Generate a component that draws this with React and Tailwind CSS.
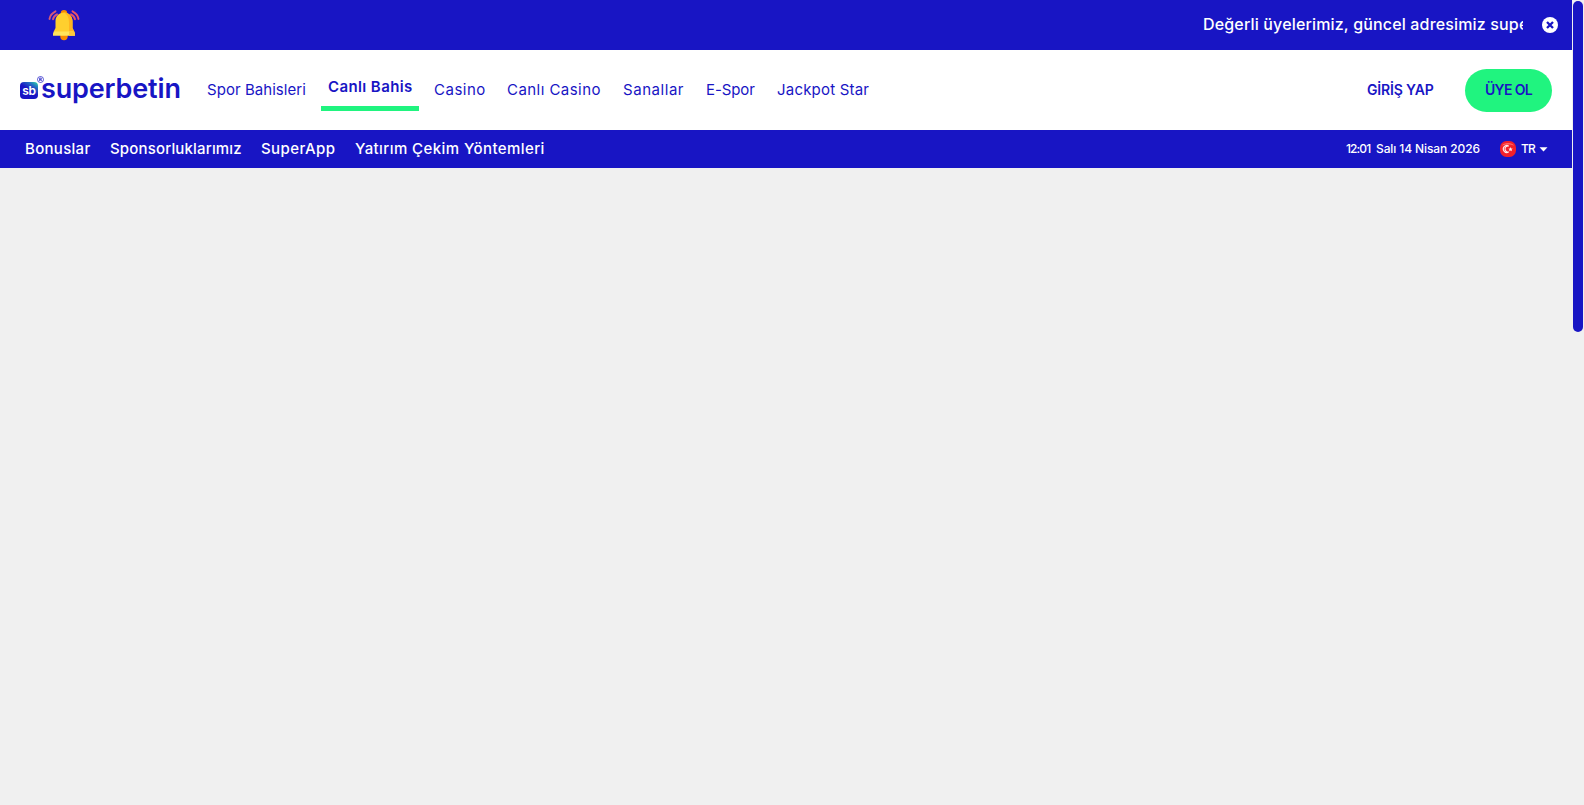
import { useState } from "react";

const NAV_ITEMS = [
  { label: "Spor Bahisleri", className: "w-[99px] tracking-[0.05px]" },
  { label: "Canlı Bahis", className: "w-[84px] tracking-[0.4px]", active: true },
  { label: "Casino", className: "w-[51px] tracking-[0.5px]" },
  { label: "Canlı Casino", className: "w-[94px] tracking-[0.45px]" },
  { label: "Sanallar", className: "w-[61px] tracking-[0.55px]" },
  { label: "E-Spor", className: "w-[49px] tracking-[-0.1px]" },
  { label: "Jackpot Star", className: "w-[92px] tracking-[0.2px]" },
];

const SUB_ITEMS = [
  { label: "Bonuslar", className: "w-[65px] tracking-[0.3px]" },
  { label: "Sponsorluklarımız", className: "w-[131px] tracking-[0.17px]" },
  { label: "SuperApp", className: "w-[74px] tracking-[0.4px]" },
  { label: "Yatırım Çekim Yöntemleri", className: "w-[190px] tracking-[0.42px]" },
];

const BellIcon = () => (
  <svg width="32" height="32" viewBox="0 0 32 32" fill="none" aria-hidden="true">
    <path d="M16 1a3.200 3.200 0 0 1 3.200 3.200V7h-6.400V4.200A3.200 3.200 0 0 1 16 1Z" fill="#f98c00" />
    <circle cx="16" cy="27.500" r="3.700" fill="#f98c00" />
    <path d="M16 3.500c4.900 0 8.500 3.800 8.500 8.500v7l2 4H5.500l2-4v-7c0-4.700 3.600-8.500 8.500-8.500Z" fill="#ffcf2e" />
    <path d="M16 3.500c4.900 0 8.500 3.800 8.500 8.500v7l2 4H21v-9c0-5-1-8-5-10.500Z" fill="#ffb420" />
    <path d="M7.200 22.500h17.600a2.200 2.200 0 0 1 2.200 2.200v2H5v-2a2.200 2.200 0 0 1 2.200-2.200Z" fill="#ffe45c" />
    <path d="M21 22.500h3.800a2.200 2.200 0 0 1 2.200 2.200v2h-6Z" fill="#ffc93a" />
    <path d="M7.500 2.300C4.200 4 2 6.500 1.500 10M9 5.300c-2 1-3.500 2.700-4 5" stroke="#d65a78" strokeWidth="1.900" strokeLinecap="round" />
    <path d="M24.500 2.300c3.300 1.700 5.500 4.200 6 7.700M23 5.300c2 1 3.500 2.700 4 5" stroke="#ed5565" strokeWidth="1.900" strokeLinecap="round" />
  </svg>
);

const CloseIcon = () => (
  <svg width="16" height="16" viewBox="0 0 16 16" aria-hidden="true">
    <circle cx="8" cy="8" r="8" fill="#fff" />
    <path d="m5 5 6 6m0-6-6 6" stroke="#1815c4" strokeWidth="2.300" />
  </svg>
);

const FlagIcon = () => (
  <svg width="16" height="16" viewBox="0 0 16 16" aria-hidden="true">
    <rect width="16" height="16" rx="6.500" fill="#f3202a" />
    <path d="M2 4.500C3.500 1 12.500 1 14 4.500 11 3 5 3 2 4.500Z" fill="#ff6a6e" />
    <path d="M8.800 5.100a3.500 3.500 0 1 0 0 5.800M8.800 5.100a3 3 0 1 0 0 5.800" fill="none" stroke="#ffe9e9" strokeWidth="1.100" />
    <path d="m10.500 6 .7 1.400 1.500.2-1.100 1.100.3 1.500-1.400-.7-1.300.7.2-1.500-1-1.100 1.500-.2Z" fill="#ffe9e9" />
  </svg>
);

const Logo = () => (
  <a href="#" className="flex w-[161px] h-[34px] ml-5 shrink-0" aria-label="superbetin">
    <span className="relative mt-[9px] flex h-[17px] w-[18px] shrink-0 items-center justify-center rounded-[4px] bg-[linear-gradient(215deg,#2fe2a0_0%,#2470c4_22%,#1815c4_48%)] font-['Inter',sans-serif] text-[12px] font-semibold leading-none tracking-[-0.3px] text-white">
      sb
      <svg className="absolute -top-[6px] left-[17px]" width="7" height="7" viewBox="0 0 7 7" fill="none" aria-hidden="true">
        <circle cx="3.500" cy="3.500" r="3" stroke="#1815c4" strokeWidth=".7" />
        <path d="M2.700 5V2.100h1a.8.8 0 0 1 0 1.600h-1m1 0L4.600 5" stroke="#1815c4" strokeWidth=".8" />
      </svg>
    </span>
    <span className="ml-[3px] whitespace-nowrap font-['Inter',sans-serif] text-[27px] font-semibold leading-[32px] tracking-[-0.15px]">
      superbetin
    </span>
  </a>
);

const App = () => {
  const [noticeOpen, setNoticeOpen] = useState(true);

  return (
    <div className="flex h-screen overflow-hidden bg-[#f0f0f0] font-['Inter',sans-serif] text-[#1815c4]">
      <div className="flex-1 min-w-0">
        {/* Announcement */}
        {noticeOpen && (
          <div className="flex h-[50px] items-center bg-[#1815c4] text-white">
            <div className="ml-12 shrink-0"><BellIcon /></div>
            <div className="ml-[50px] flex-1 min-w-0 overflow-hidden">
              <p className="pl-[1073px] pb-[2px] whitespace-nowrap text-[16px] font-medium leading-6 tracking-[0.16px]">
                Değerli üyelerimiz, güncel adresimiz superbetin
              </p>
            </div>
            <button onClick={() => setNoticeOpen(false)} className="ml-[19px] mr-[14px] shrink-0" aria-label="Kapat">
              <CloseIcon />
            </button>
          </div>
        )}

        {/* Header */}
        <header className="flex h-20 items-center bg-white">
          <Logo />
          <nav className="ml-[19px] flex h-full items-center gap-2">
            {NAV_ITEMS.map(({ label, className, active }) => (
              <a key={label} href="#"
                className={`flex px-[7px] text-[15px] whitespace-nowrap ${
                  active ? "mt-[1px] h-[41px] border-b-[5px] border-[#20f47f] pt-[6px] leading-[22px] font-semibold" : "leading-[22px]"
                }`}>
                <span className={className}>{label}</span>
              </a>
            ))}
          </nav>
          <div className="ml-auto mr-5 flex items-center text-[14px] font-semibold">
            <a href="#" className="w-[68px] pb-px whitespace-nowrap tracking-[-0.17px]">GİRİŞ YAP</a>
            <button className="ml-[30px] h-[43px] w-[87px] rounded-full bg-[#20f47f] pb-px whitespace-nowrap tracking-[-0.65px]">ÜYE OL</button>
          </div>
        </header>

        {/* Secondary bar */}
        <div className="flex h-[38px] items-center bg-[#1815c4] text-white">
          <nav className="ml-[25px] flex gap-5 text-[15px] font-medium leading-[22px] whitespace-nowrap">
            {SUB_ITEMS.map(({ label, className }) => (
              <a key={label} href="#" className={className}>{label}</a>
            ))}
          </nav>
          <div className="ml-auto mr-6 flex items-center text-[12px] font-medium whitespace-nowrap">
            <span className="w-[25px] tracking-[-0.9px]">12:01</span>
            <span className="ml-[5px] w-[105px] tracking-[-0.1px]">Salı 14 Nisan 2026</span>
            <button className="ml-[19px] flex items-center">
              <FlagIcon />
              <span className="ml-[5px] w-[14px] tracking-[-0.8px]">TR</span>
              <svg className="ml-1" width="9" height="5" viewBox="0 0 9 5" aria-hidden="true">
                <path d="M.5.300h8L4.500 4.500Z" fill="#fff" />
              </svg>
            </button>
          </div>
        </div>
      </div>

      {/* Scrollbar */}
      <div className="w-3 shrink-0 px-px pt-px">
        <div className="h-[331px] rounded-full bg-[#1815c4]" />
      </div>
    </div>
  );
};

export default App;
